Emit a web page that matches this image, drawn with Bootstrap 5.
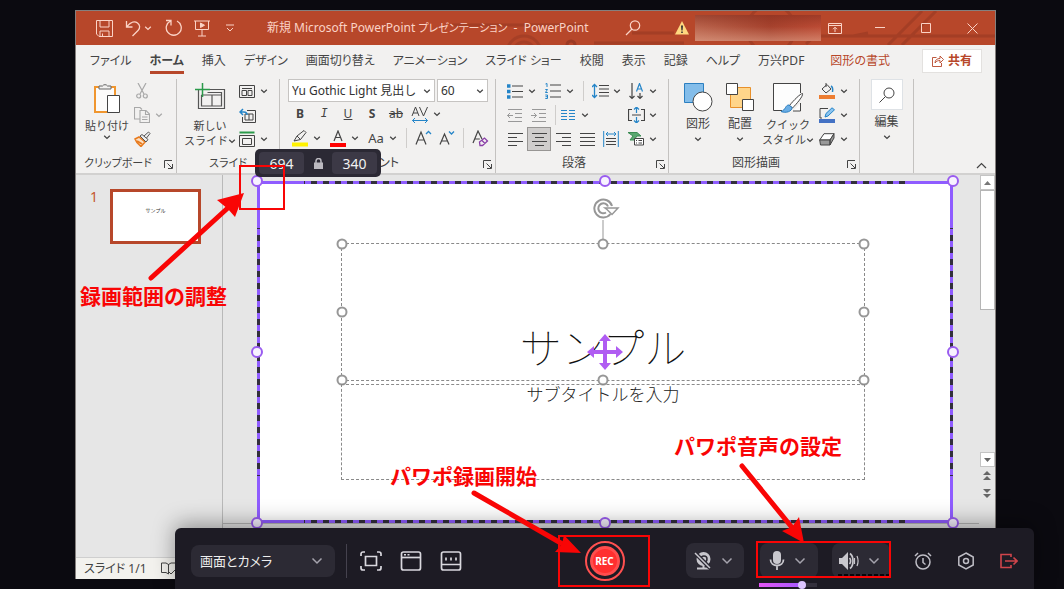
<!DOCTYPE html>
<html lang="ja">
<head>
<meta charset="utf-8">
<meta name="viewport" content="width=device-width, initial-scale=1">
<title>PowerPoint</title>
<link href="https://cdn.jsdelivr.net/npm/bootstrap@5.3.0/dist/css/bootstrap.min.css" rel="stylesheet">
<style>
:root{--ppt:#b7472a;--vio:#8f5cff;--hot:#f90505;--dark:#1d1b24;--dark2:#2c2a34;--ink:#444}
html,body{height:100%}
body{background:#0b0a10;font-family:"Noto Sans","Noto Sans CJK JP",sans-serif;font-size:12px;line-height:16px;color:var(--ink);font-feature-settings:"palt";overflow:hidden}
button{font-family:inherit;background:none;border:0;padding:0;color:inherit}
svg{display:block;flex:none}
svg:not([fill]){fill:none}
svg:not([stroke]){stroke:currentColor}
.app{height:calc(100% - 20px);margin:10px 68px 10px 75px;background:#f2f1f0;border:1px solid #85807e;border-bottom:0}
/* title bar */
.tbar{height:34px;background:var(--ppt);color:#fbd3c6}
.circuit{left:320px;right:0;top:0;bottom:0;color:#9b3a24}
.qat button{width:28px}
.smudge{width:126px;height:26px;background:linear-gradient(rgba(140,48,30,.6),rgba(190,80,55,.1) 45%,rgba(230,170,145,.55)),linear-gradient(90deg,#b9664f,#a3402c 60%,#bb4a34)}
.winbtn{width:46px;height:34px}
/* tabs */
.tabs{height:29px;padding-left:14px;gap:18px;padding-top:2px}
.tabs a{color:var(--ink);text-decoration:none;line-height:20px;white-space:nowrap}
.tabs a.on{font-weight:700;padding-top:3px;border-bottom:3px solid var(--ppt)}
.tabs a.ctx{color:var(--ppt)}
.share{width:60px;height:24px;background:#fff;border:1px solid #e3e1df;color:var(--ppt);font-weight:700;margin-right:13px}
/* ribbon */
.ribbon{height:99px;padding-top:5px}
.grp{border-right:1px solid #c4c2c0;position:relative}
.grp .cap{height:18px;text-align:center}
.sm{font-size:11px}
.launch{position:absolute;right:3px;bottom:4px}
.big{line-height:15px;white-space:nowrap}
.ic{width:24px;height:24px;display:flex;align-items:center;justify-content:center}
.ch{width:10px;height:24px;display:flex;align-items:center;justify-content:center}
.ic.on{background:#cfcdcc;border:1px solid #979593}
.vsep{width:1px;height:20px;background:#cfcdcb}
.field{height:23px;border:1px solid #c6c4c2;background:#fff;position:relative}
.field select{display:block;appearance:none;border:0;background:transparent;width:100%;height:21px;padding:0 14px 0 3px;font-size:12px;line-height:21px;color:#333}
.field svg,.modebox svg{position:absolute;right:3px;top:50%;transform:translateY(-50%);pointer-events:none}
/* workspace */
.work{background:#e6e6e6;min-height:0;border-top:2px solid #d2d1d0}
.thumbs{width:147px;border-right:1px solid #b9b9b9;padding:14px 21px 0 14px}
.thumb{width:91px;height:55px;background:#fff;border:3px solid var(--ppt);font-size:5px;line-height:5px;color:#333}
.stage{padding:6px 26px 0 34px;min-width:0}
.slide{background:#fff;position:relative;padding:62px 88px 43px 84px}
.ph{border:1px dashed #8a8a8a;position:relative}
.ph-t{flex:138;margin-bottom:3px}
.ph-s{flex:96}
.ph h1{font:100 42px/48px "Noto Sans CJK JP",sans-serif;font-feature-settings:normal;color:#111;margin:0 0 10px}
.ph p{font:300 17px/17px "Noto Sans CJK JP",sans-serif;font-feature-settings:normal;color:#222;margin:0}
.grip{position:absolute;width:11px;height:11px;border:2px solid #979797;border-radius:50%;background:#fff;transform:translate(-50%,-50%)}
.vg{border-color:#9a5cf0;width:12px;height:12px;background:#f7f2ff}
.l0{left:0}.l5{left:50%}.l1{left:100%}.t0{top:0}.t5{top:50%}.t1{top:100%}
.edge{position:absolute;--d:#33303c}
.eh{left:0;right:0;height:3px;background:linear-gradient(90deg,var(--vio) 47px,transparent 47px,transparent calc(100% - 47px),var(--vio) calc(100% - 47px)),repeating-linear-gradient(90deg,var(--vio) 0 6px,var(--d) 6px 12px)}
.ev{top:0;bottom:0;width:3px;background:linear-gradient(var(--vio) 47px,transparent 47px,transparent calc(100% - 47px),var(--vio) calc(100% - 47px)),repeating-linear-gradient(var(--vio) 0 6px,var(--d) 6px 12px)}
.rot{left:50%;bottom:100%;transform:translateX(-10px)}
.mover{left:50%;top:50%;transform:translate(-50%,-50%)}
.notes{height:34px;border-top:1px solid #b5b5b5;background:#e6e6e6}
.sbar{width:16px}
.sbtn{width:15px;height:15px;background:#fff;border:1px solid #c4c4c4;display:flex;align-items:center;justify-content:center}
.sthumb{width:15px;height:120px;background:#fff;border:1px solid #b5b5b5}
.status{height:22px;background:#f3f2ee;border-top:1px solid #cfcfcf;padding-left:8px;gap:14px}
/* recorder */
.sizer{left:255px;top:149px;width:126px;height:28px;background:#2b2934;border-radius:5px;padding:0 4px}
.sizer input{width:45px;height:22px;border:0;border-radius:4px;background:#3c3946;color:#f1f1f1;text-align:center;font-size:14px;padding:0;font-family:"Noto Sans",sans-serif}
.rec{left:175px;right:30px;bottom:0;height:61px;background:var(--dark);border-radius:6px 6px 0 0;color:#d9d8de;display:grid;grid-template-columns:1fr auto 1fr;align-items:center;padding:4px 16px 0;box-shadow:0 -4px 22px rgba(0,0,0,.38)}
.modebox{width:144px;height:32px;position:relative}
.modebox select{appearance:none;width:100%;height:32px;border:0;border-radius:8px;background:var(--dark2);color:#eee;padding:0 30px 0 9px;font-size:13px;font-feature-settings:"palt"}
.modebox svg{right:12px}
.dev{width:58px;height:35px;border-radius:8px;background:var(--dark2);color:#c9c8ce;gap:9px;padding-right:4px}
.recbtn{width:40px;height:40px;border-radius:50%;border:2px solid #ff5050;padding:3px}
.recbtn span{display:block;height:30px;border-radius:50%;background:#ff2f2f;border:3px solid #ff4d4d;color:#fff;font:700 10px/24px "Noto Sans",sans-serif}
.vol{position:absolute;left:-1px;top:38px;width:58px;height:8px;margin:0;appearance:none;background:linear-gradient(90deg,#e455f5,#a45bff 44px,#34313d 44px) center/100% 4px no-repeat}
.vol::-webkit-slider-thumb{appearance:none;width:8px;height:8px;border-radius:50%;background:#dcc5ff}
.lvl{position:absolute;left:6px;right:0;bottom:2px;height:2px;background:repeating-linear-gradient(90deg,#08070b 0 4px,transparent 4px 6px)}
/* callouts */
.note{position:absolute;color:var(--hot);font:700 21px/24px "Noto Sans CJK JP",sans-serif;font-feature-settings:normal;white-space:nowrap}
.box{position:absolute;border:2px solid var(--hot);pointer-events:none}
.arrow{position:absolute;color:var(--hot);pointer-events:none}
</style>
</head>
<body>
<svg width="0" height="0" class="position-absolute"><defs>
<symbol id="dn" viewBox="0 0 8 8"><path d="M1.2 2.8 4 5.4 6.8 2.8" stroke-width="1.3"/></symbol>
<symbol id="dn2" viewBox="0 0 12 12"><path d="M1.5 3.5 6 8l4.500-4.500" stroke-width="1.5"/></symbol>
<symbol id="la" viewBox="0 0 9 9"><path d="M.5 8V.5H8M3.500 3.500l4.500 4.500M8.500 4v4.500H4"/></symbol>
</defs></svg>

<main class="app d-flex flex-column">
  <header class="tbar d-flex align-items-center position-relative">
    <svg class="circuit position-absolute" width="600" height="34" viewBox="0 0 600 34" stroke-width="3"><path d="M56 14h132M198 32h90M236 22h42M410 33l9-8h38l15-3M457 25h142M492 34l34-34M506 34l34-34" opacity=".7"/><circle cx="128" cy="42" r="17" opacity=".6"/><circle cx="128" cy="42" r="11" opacity=".6"/><circle cx="175" cy="34" r="4"/><circle cx="375" cy="18" r="24" opacity=".7"/></svg>
    <div class="qat d-flex align-items-center position-relative" style="margin-left:14px">
      <button class="d-flex justify-content-center" aria-label="保存"><svg width="17" height="17" viewBox="0 0 17 17"><path d="M.5.5h16v16H3l-2.500-2.500zM4 .5V7h9V.5M4 16.500V11h9v5.500M6.500 13.500v3"/></svg></button>
      <button class="d-flex justify-content-center ms-1" style="width:22px" aria-label="元に戻す"><svg width="17" height="17" viewBox="0 0 17 17" stroke-width="1.300"><path d="M1.500 1v6h6M2 6.500C6 1.500 10 1 12.500 3s3 5 .5 7.500L7.500 16"/></svg></button>
      <svg width="8" height="8"><use href="#dn"/></svg>
      <button class="d-flex justify-content-center ms-2" aria-label="やり直し"><svg width="18" height="18" viewBox="0 0 18 18" stroke-width="1.300"><path d="M1 1.500h5v5M5.500 2A7.500 7.500 0 1 0 12 2"/></svg></button>
      <button class="d-flex justify-content-center" aria-label="開始"><svg width="16" height="17" viewBox="0 0 16 17"><path d="M0 1h16M1.500 1v8.500h13V1M8 9.500V16M4 16h8"/><path d="M6.500 3v4.500l4-2.250z" fill="currentColor"/></svg></button>
      <button class="d-flex justify-content-center" aria-label="カスタマイズ"><svg width="8" height="9" viewBox="0 0 8 9"><path d="M0 1h8M1 4l3 3 3-3"/></svg></button>
    </div>
    <div class="position-relative text-nowrap" style="margin-left:23px">新規 Microsoft PowerPoint <span class="sm">プレゼンテーション</span>&nbsp; -&nbsp; PowerPoint</div>
    <div class="d-flex align-items-center ms-auto position-relative">
      <button aria-label="検索"><svg width="16" height="16" viewBox="0 0 16 16" stroke-width="1.200"><circle cx="10" cy="5.500" r="4.700"/><path d="M7 9 1 15"/></svg></button>
      <svg style="margin:0 6px 0 34px" width="14" height="14" viewBox="0 0 14 14" stroke="none"><path d="M7 0l7 13.500H0z" fill="#ffd880"/><path d="M6 4.500h2L7.600 9.500H6.400zM6.200 10.500h1.600v1.600H6.200z" fill="#333"/></svg>
      <div class="smudge"></div>
      <button class="d-flex justify-content-center" style="width:28px" aria-label="リボン"><svg width="14" height="11" viewBox="0 0 14 11"><path d="M.5.5h13v10H.5zM.5 2.500h13M7 9V4.500M5 6.200l2-2 2 2"/></svg></button>
      <button class="winbtn d-flex align-items-center justify-content-center ms-2" aria-label="最小化"><svg width="10" height="10"><path d="M0 4.500h10"/></svg></button>
      <button class="winbtn d-flex align-items-center justify-content-center" aria-label="最大化"><svg width="10" height="10"><path d="M.5.5h9v9h-9z"/></svg></button>
      <button class="winbtn d-flex align-items-center justify-content-center" aria-label="閉じる"><svg width="11" height="11"><path d="m.5.500 10 10m0-10-10 10"/></svg></button>
    </div>
  </header>

  <nav class="tabs d-flex align-items-center">
    <a href="#">ファイル</a><a href="#" class="on">ホーム</a><a href="#">挿入</a><a href="#">デザイン</a><a href="#">画面切り替え</a><a href="#">アニメーション</a><a href="#">スライド ショー</a><a href="#">校閲</a><a href="#">表示</a><a href="#">記録</a><a href="#">ヘルプ</a><a href="#">万兴PDF</a><a href="#" class="ctx ms-2">図形の書式</a>
    <button class="share d-flex align-items-center justify-content-center gap-1 ms-auto"><svg width="12" height="12" viewBox="0 0 12 12"><path d="M4.500 2.500h-4v9h9V8M3 8c0-3 2-4.500 5-4.500V1l3.500 3.500L8 8V5.500C6 5.500 4.500 6 3 8z" stroke-width=".9"/></svg>共有</button>
  </nav>

  <section class="ribbon d-flex">
    <div class="grp d-flex flex-column" style="width:101px">
      <div class="d-flex flex-grow-1 ps-2">
        <button class="big sm d-flex flex-column align-items-center" style="width:46px">
          <svg class="mt-1" width="28" height="31" viewBox="0 0 28 31"><path d="M2 4h20v25H2z" stroke="#f0962f" stroke-width="2" fill="#fcfbfa"/><path d="M6 6V3h3.500a3 3 0 0 1 5 0H18v3z" fill="#f2f1f0" stroke="#666"/><path d="M14.500 12.500h12v17h-12z" fill="#fff" stroke="#444"/></svg>
          <span class="mt-1">貼り付け</span><svg width="8" height="8"><use href="#dn"/></svg>
        </button>
        <div class="text-secondary">
          <button class="ic" aria-label="切り取り"><svg width="12" height="16" viewBox="0 0 12 16" stroke="#a8a8a8" stroke-width="1.200"><path d="M2 0l6 11M10 0 4 11"/><circle cx="2.700" cy="13" r="2"/><circle cx="9.300" cy="13" r="2"/></svg></button>
          <div class="d-flex"><button class="ic" aria-label="コピー"><svg width="16" height="16" viewBox="0 0 16 16" stroke="#a8a8a8" stroke-width="1.100"><path d="M6 12H.5V.5H6l2 2M6 3.500h6l3.500 3.500v8.500H6zM11.500 3.500v4h4M8 10h5.500M8 12.500h5.500"/></svg></button><span class="ch"><svg width="8" height="8" stroke="#a8a8a8"><use href="#dn"/></svg></span></div>
          <button class="ic" aria-label="書式のコピー"><svg width="17" height="16" viewBox="0 0 17 16"><path d="m1 8 4-2 6 5-4 4.500C5 14 2 11 1 8z" fill="#fbe0c4" stroke="#e87a1d" stroke-width="1.500"/><path d="M3 10l5 3" stroke="#e87a1d" stroke-width="2"/><path d="m6 5 2-1.500 6 5L12 11zM10 5l4.500-4 1.500 1.500L12.500 7" stroke="#555" fill="#eee"/></svg></button>
        </div>
      </div>
      <div class="cap sm pe-3">クリップボード</div><svg class="launch" width="9" height="9"><use href="#la"/></svg>
    </div>

    <div class="grp d-flex flex-column" style="width:103px">
      <div class="d-flex flex-grow-1 ps-2">
        <button class="big sm d-flex flex-column align-items-center" style="width:50px">
          <svg class="mt-1" width="31" height="27" viewBox="0 0 31 27"><path d="M3.500 6.500h26v19h-26zM6.500 12h20M6.500 12v11h20V9.500h-14M17 12v11" stroke="#555" stroke-width="1.200"/><path d="M7.500 0v14M0 6.500h15" stroke="#2a9a4a" stroke-width="1.500"/></svg>
          <span class="mt-2">新しい</span><span class="d-flex align-items-center">スライド<svg width="8" height="8"><use href="#dn"/></svg></span>
        </button>
        <div>
          <div class="d-flex"><button class="ic" aria-label="レイアウト"><svg width="16" height="13" viewBox="0 0 16 13"><path d="M.5.500h15v12H.5zM3 3.500h10M3 5.500h4.500v5H3zM9 5.500h4v5H9z"/></svg></button><span class="ch"><svg width="8" height="8"><use href="#dn"/></svg></span></div>
          <button class="ic" aria-label="リセット"><svg width="17" height="15" viewBox="0 0 17 15"><path d="M8 2.500h8.500v12h-13V9M6 6h8v6H6zM10 6v6"/><path d="M1 4h4c2 0 3 1 3 3M4 1 1 4l3 3" stroke="#2585c8" stroke-width="1.500"/></svg></button>
          <div class="d-flex"><button class="ic" aria-label="セクション"><svg width="16" height="16" viewBox="0 0 16 16"><path d="M.5 1.500h15" stroke="#2a9a4a" stroke-width="2"/><path d="M.5 4.500h15v11H.5zM3.500 7.500h9v6h-9z"/></svg></button><span class="ch"><svg width="8" height="8"><use href="#dn"/></svg></span></div>
        </div>
      </div>
      <div class="cap sm">スライド</div>
    </div>

    <div class="grp d-flex flex-column" style="width:216px">
      <div class="flex-grow-1 ps-2">
        <div class="d-flex" style="gap:2px">
          <div class="field" style="width:147px"><select aria-label="フォント"><option>Yu Gothic Light 見出し</option></select><svg width="8" height="8"><use href="#dn"/></svg></div>
          <div class="field" style="width:51px"><select aria-label="サイズ"><option>60</option></select><svg width="8" height="8"><use href="#dn"/></svg></div>
        </div>
        <div class="d-flex">
          <button class="ic fw-bold">B</button><button class="ic fst-italic font-monospace">I</button><button class="ic text-decoration-underline">U</button><button class="ic fw-bold">S</button><button class="ic text-decoration-line-through">ab</button>
          <button class="ic" aria-label="文字の間隔"><svg width="18" height="17" viewBox="0 0 18 17"><path d="m1 10 3.500-9L8 10M2.200 7h4.600M8.500 1l4 9 4-9"/><path d="M1.500 14.500h15M4 12l-2.500 2.500L4 17M14 12l2.500 2.500L14 17" stroke="#2585c8"/></svg></button><span class="ch"><svg width="8" height="8"><use href="#dn"/></svg></span>
        </div>
        <div class="d-flex align-items-center">
          <button class="ic" aria-label="蛍光ペン"><svg width="16" height="17" viewBox="0 0 16 17"><path d="M0 14.500h16" stroke="#fff200" stroke-width="4"/><path d="m2 11 3-5 7-5.500 2 2L8.500 9.500zM5 6l3.500 3.500"/></svg></button><span class="ch"><svg width="8" height="8"><use href="#dn"/></svg></span>
          <button class="ic ms-1" aria-label="フォントの色"><svg width="16" height="17" viewBox="0 0 16 17"><path d="M0 15h16" stroke="#f00" stroke-width="4"/><path d="M4 11 8 1l4 10M5.200 7.500h5.600" stroke-width="1.200"/></svg></button><span class="ch"><svg width="8" height="8"><use href="#dn"/></svg></span>
          <button class="ic ms-1" style="font-size:13px">Aa</button><span class="ch"><svg width="8" height="8"><use href="#dn"/></svg></span>
          <span class="vsep ms-2 me-1"></span>
          <button class="ic" aria-label="拡大"><svg width="17" height="16" viewBox="0 0 17 16"><path d="M1 14.500 6 2l5 12.500M2.800 10h6.400" stroke-width="1.200"/><path d="m11 4 2.500-2.500L16 4" stroke="#2585c8" stroke-width="1.300"/></svg></button>
          <button class="ic" aria-label="縮小"><svg width="16" height="16" viewBox="0 0 16 16"><path d="M1 14.500 5.500 4 10 14.500M2.800 11h5.400" stroke-width="1.200"/><path d="M10 1.500 12.500 4 15 1.500" stroke="#2585c8" stroke-width="1.300"/></svg></button>
          <span class="vsep ms-1"></span>
          <button class="ic ms-1" aria-label="書式のクリア"><svg width="17" height="17" viewBox="0 0 17 17"><path d="M1 13 6 1l4 8M2.800 9h5" stroke-width="1.200"/><path d="m7.500 12 5-4 3 3-5 4.500H8zM9.500 10l3.500 3.500" stroke="#8a3fa8" stroke-width="1.300"/></svg></button>
        </div>
      </div>
      <div class="cap pe-3">フォント</div><svg class="launch" width="9" height="9"><use href="#la"/></svg>
    </div>

    <div class="grp d-flex flex-column" style="width:173px">
      <div class="flex-grow-1" style="padding:0 10px 0 7px">
        <div class="d-flex align-items-center">
          <button class="ic" aria-label="箇条書き"><svg width="16" height="15" viewBox="0 0 16 15"><path d="M5 2h11M5 7.500h11M5 13h11"/><path d="M0 2h3.500M0 7.500h3.500M0 13h3.500" stroke="#2585c8" stroke-width="3.500"/></svg></button><span class="ch"><svg width="8" height="8"><use href="#dn"/></svg></span>
          <button class="ic ms-1" aria-label="段落番号"><svg width="16" height="16" viewBox="0 0 16 16"><path d="M5 2h11M5 8h11M5 14h11"/><path d="M.5 1 2 .5V4M.3 6.500h2.200L.4 9.500h2.400M.3 12h2.200v3.500H.3M.5 13.700h2" stroke="#2585c8"/></svg></button><span class="ch"><svg width="8" height="8"><use href="#dn"/></svg></span>
          <span class="vsep ms-2"></span>
          <button class="ic ms-1" aria-label="行間"><svg width="17" height="16" viewBox="0 0 17 16"><path d="M7 2.500h10M7 6h10M7 9.500h10M7 13h10"/><path d="M2.500 1v14M0 4l2.500-2.500L5 4M0 12l2.500 2.500L5 12" stroke="#2585c8" stroke-width="1.300"/></svg></button><span class="ch"><svg width="8" height="8"><use href="#dn"/></svg></span>
          <button class="ic ms-auto" aria-label="文字列の方向"><svg width="15" height="17" viewBox="0 0 15 17"><path d="M3 0v15.500M.5 13 3 15.500 5.500 13M11 10v5.500M8.500 13l2.500 2.500 2.500-2.500" stroke-width="1.200"/><path d="m7.500 8.500 3-8 3 8M8.500 6h4" stroke="#2585c8" stroke-width="1.200"/></svg></button><span class="ch"><svg width="8" height="8"><use href="#dn"/></svg></span>
        </div>
        <div class="d-flex align-items-center">
          <button class="ic" aria-label="インデント解除"><svg width="16" height="13" viewBox="0 0 16 13" stroke="#999"><path d="M1 .5h14M8 4.500h7M8 8.500h7M1 12.500h14M6 6.500H.5M3 4 .5 6.500 3 9"/></svg></button>
          <button class="ic" aria-label="インデント"><svg width="16" height="13" viewBox="0 0 16 13" stroke="#999"><path d="M1 .5h14M8 4.500h7M8 8.500h7M1 12.500h14M0 6.500h5.500M3 4l2.500 2.500L3 9"/></svg></button>
          <span class="vsep mx-1"></span>
          <button class="ic" style="width:16px" aria-label="段組み"><svg width="14" height="10" viewBox="0 0 14 10" stroke="#2585c8"><path d="M0 .5h6M0 3.500h6M0 6.500h6M0 9.500h6M8 .5h6M8 3.500h6M8 6.500h6M8 9.500h6"/></svg></button><span class="ch ms-1"><svg width="8" height="8"><use href="#dn"/></svg></span>
          <button class="ic ms-auto" aria-label="文字の配置"><svg width="17" height="16" viewBox="0 0 17 16"><path d="M4 2.500H.5v11H4M13 2.500h3.500v11H13M4 8h9" stroke-width="1.200"/><path d="M8.500 0v6M8.500 10v6M6 2.500 8.500 0 11 2.500M6 13.500 8.500 16l2.500-2.500" stroke="#2585c8" stroke-width="1.200"/></svg></button><span class="ch"><svg width="8" height="8"><use href="#dn"/></svg></span>
        </div>
        <div class="d-flex align-items-center">
          <button class="ic" aria-label="左揃え"><svg width="15" height="13" viewBox="0 0 15 13"><path d="M0 .5h15M0 4.500h9M0 8.500h15M0 12.500h9"/></svg></button>
          <button class="ic on" aria-label="中央揃え"><svg width="15" height="13" viewBox="0 0 15 13"><path d="M0 .5h15M3 4.500h9M0 8.500h15M3 12.500h9"/></svg></button>
          <button class="ic" aria-label="右揃え"><svg width="15" height="13" viewBox="0 0 15 13"><path d="M0 .5h15M6 4.500h9M0 8.500h15M6 12.500h9"/></svg></button>
          <button class="ic" aria-label="両端揃え"><svg width="15" height="13" viewBox="0 0 15 13"><path d="M0 .5h15M0 4.500h15M0 8.500h15M0 12.500h15"/></svg></button>
          <button class="ic" aria-label="均等割り付け"><svg width="16" height="16" viewBox="0 0 16 16"><path d="M3 7.500h10M3 10.500h10M3 13.500h10"/><path d="M.7 0v16M15.300 0v16M3 3h10M5 1 3 3l2 2M11 1l2 2-2 2" stroke="#2585c8"/></svg></button>
          <button class="ic ms-auto" aria-label="SmartArt"><svg width="17" height="14" viewBox="0 0 17 14"><path d="M0 .5h9l4 3.500H9L6 8H2l3-4z" fill="#5aa870" stroke="#3c8c54"/><path d="M6.500 6.500h9v6.500h-9z" fill="#fff"/><path d="M8 8.500h1M10.500 8.500H14M8 11h1M10.500 11H14"/></svg></button><span class="ch"><svg width="8" height="8"><use href="#dn"/></svg></span>
        </div>
      </div>
      <div class="cap pe-3">段落</div><svg class="launch" width="9" height="9"><use href="#la"/></svg>
    </div>

    <div class="grp d-flex flex-column" style="width:191px">
      <div class="d-flex flex-grow-1 ps-2">
        <button class="big d-flex flex-column align-items-center" style="width:42px"><svg class="mt-1" width="29" height="29" viewBox="0 0 29 29"><path d="M.5.500h19v19H.5z" fill="#83bdea" stroke="#2c7fc0"/><circle cx="18.500" cy="18.500" r="9.500" fill="#fff" stroke="#444"/></svg><span class="mt-1">図形</span><svg class="mt-1" width="8" height="8"><use href="#dn"/></svg></button>
        <button class="big d-flex flex-column align-items-center" style="width:42px"><svg class="mt-1" width="29" height="29" viewBox="0 0 29 29"><path d="M4.500 4.500h20v20h-20z" fill="#ffd58a" stroke="#e8902a"/><path d="M.5.500h11v11H.5zM16.500 16.500h11v11h-11z" fill="#fff" stroke="#444"/></svg><span class="mt-1">配置</span><svg class="mt-1" width="8" height="8"><use href="#dn"/></svg></button>
        <button class="big sm d-flex flex-column align-items-center" style="width:54px"><svg class="mt-1" width="31" height="30" viewBox="0 0 31 30"><path d="M9 27.500H.5V.5h27V10M27.500 20v8H20" fill="#fdfdfd"/><path d="M29.500 10.500c-2 0-9 7-13 12l3 2.500c4-4 11-12 10-14.500z" fill="#fff"/><path d="M16 22c-4 0-3 5-8 6.500 5 2 11 0 11-4z" fill="#6aaee6" stroke="#2c7fc0"/></svg><span class="mt-1">クイック</span><span class="d-flex align-items-center">スタイル<svg width="8" height="8"><use href="#dn"/></svg></span></button>
        <div>
          <div class="d-flex"><button class="ic" aria-label="塗りつぶし"><svg width="16" height="16" viewBox="0 0 16 16"><path d="M0 14h16" stroke="#ed7d31" stroke-width="4"/><path d="m3 6 5-4.500L12 6l-5 4zM7 4V0"/><path d="M12 3c2 1 2 3 1.500 6" stroke="#2585c8" stroke-width="1.500"/></svg></button><span class="ch"><svg width="8" height="8"><use href="#dn"/></svg></span></div>
          <div class="d-flex"><button class="ic" aria-label="枠線"><svg width="16" height="16" viewBox="0 0 16 16"><path d="M0 14h16" stroke="#4472c4" stroke-width="4"/><path d="M9 1.500H1V11h2"/><path d="m6 10 1-3.500L13 .8l2.500 2L9 9z" fill="#8cc4f0" stroke="#2585c8"/></svg></button><span class="ch"><svg width="8" height="8"><use href="#dn"/></svg></span></div>
          <div class="d-flex"><button class="ic" aria-label="効果"><svg width="16" height="13" viewBox="0 0 16 13"><path d="M.7 7 5 .700h10L11 7z" fill="#fff"/><path d="M.7 7H11v5H1.500zM11 7l4-6.300V5l-4 7z" fill="#999"/></svg></button><span class="ch"><svg width="8" height="8"><use href="#dn"/></svg></span></div>
        </div>
      </div>
      <div class="cap pe-3">図形描画</div><svg class="launch" width="9" height="9"><use href="#la"/></svg>
    </div>

    <div class="grp d-flex flex-column" style="width:54px">
      <button class="big d-flex flex-column align-items-center"><span class="bg-white border d-flex align-items-center justify-content-center" style="width:32px;height:31px"><svg width="16" height="16" viewBox="0 0 16 16"><circle cx="10" cy="6" r="5"/><path d="m6.500 9.500-6 6"/></svg></span><span class="mt-1">編集</span><svg class="mt-1" width="8" height="8"><use href="#dn"/></svg></button>
    </div>
    <button class="ms-auto align-self-end me-2 mb-1" aria-label="リボンを折りたたむ"><svg width="11" height="7"><path d="m1 6 4.500-4.500L10 6" stroke-width="1.200"/></svg></button>
  </section>

  <section class="work d-flex flex-grow-1">
    <aside class="thumbs d-flex align-items-start justify-content-between flex-shrink-0">
      <span style="color:#c4552f;font-size:14px">1</span>
      <button class="thumb d-flex justify-content-center pt-3">サンプル</button>
    </aside>
    <div class="d-flex flex-column flex-grow-1">
      <div class="stage d-flex flex-column flex-grow-1">
        <article class="slide d-flex flex-column flex-grow-1">
          <div class="ph ph-t d-flex align-items-end justify-content-center"><h1>サンプル</h1>
            <svg class="rot position-absolute" width="28" height="46" viewBox="0 0 28 46" stroke="#979797"><path d="M10 22v24"/><path d="M17.500 16a9 9 0 1 1 1.500-8" stroke-width="2"/><path d="M13 14.500a5 5 0 1 1 2-6" stroke-width="2"/><path d="M12 10h13l-6 6.500-5-5z" fill="#fff" stroke-width="1.500"/></svg>
            <i class="grip l0 t0"></i><i class="grip l5 t0"></i><i class="grip l1 t0"></i><i class="grip l0 t5"></i><i class="grip l1 t5"></i><i class="grip l0 t1"></i><i class="grip l5 t1"></i><i class="grip l1 t1"></i>
          </div>
          <div class="ph ph-s text-center"><p>サブタイトルを入力</p></div>
          <i class="edge eh t0"></i><i class="edge eh bottom-0"></i><i class="edge ev l0"></i><i class="edge ev end-0"></i>
          <i class="grip vg l0 t0"></i><i class="grip vg l5 t0"></i><i class="grip vg l1 t0"></i><i class="grip vg l0 t5"></i><i class="grip vg l1 t5"></i><i class="grip vg l0 t1"></i><i class="grip vg l5 t1"></i><i class="grip vg l1 t1"></i>
          <svg class="mover position-absolute" width="36" height="36" viewBox="0 0 36 36" stroke="none" fill="#b05cf2"><path d="m18 0 6 7h-4v9h9v-4l7 6-7 6v-4h-9v9h4l-6 7-6-7h4v-9H7v4l-7-6 7-6v4h9V7h-4z"/></svg>
        </article>
      </div>
      <div class="notes"></div>
    </div>
    <div class="sbar d-flex flex-column align-items-center">
      <span class="sbtn"><svg width="7" height="4"><path d="M0 4 3.500 0 7 4z" fill="#777" stroke="none"/></svg></span>
      <span class="sthumb"></span>
      <span class="sbtn mt-auto"><svg width="7" height="4"><path d="M0 0 3.500 4 7 0z" fill="#666" stroke="none"/></svg></span>
      <svg class="mt-1" width="8" height="9" fill="#666" stroke="none"><path d="M0 4 4 0l4 4zM0 9l4-4 4 4z"/></svg>
      <svg style="margin:9px 0 59px" width="8" height="9" fill="#666" stroke="none"><path d="m0 0 4 4 4-4zM0 5l4 4 4-4z"/></svg>
    </div>
  </section>
  <footer class="status d-flex align-items-center"><span>スライド 1/1</span><svg width="15" height="13" viewBox="0 0 15 13"><path d="M7.500 2v10L5 10.500H.5V1H5l2.500 1.500L10 1h4.500v9M8 10l2 2 4-4"/></svg></footer>
</main>

<div class="sizer position-absolute d-flex align-items-center justify-content-between">
  <input aria-label="幅" value="694">
  <svg width="9" height="11" viewBox="0 0 9 11"><path d="M0 4.500h9V11H0z" fill="#bbb9c0" stroke="none"/><path d="M2 5V3a2.500 2.500 0 0 1 5 0v2" stroke="#bbb9c0" stroke-width="1.500"/></svg>
  <input aria-label="高さ" value="340">
</div>

<div class="rec position-absolute">
  <div class="d-flex align-items-center">
    <div class="modebox"><select aria-label="録画モード"><option>画面とカメラ</option></select><svg width="12" height="12" stroke="#a5a3ad"><use href="#dn2"/></svg></div>
    <span class="vsep" style="height:34px;background:#45424e;margin:0 13px 0 11px"></span>
    <div class="d-flex" style="gap:18px">
      <button aria-label="範囲"><svg width="22" height="20" viewBox="0 0 22 20" stroke-width="1.700"><path d="M5.500 5.500h11v9h-11zM1 5V3a2 2 0 0 1 2-2h2M17 1h2a2 2 0 0 1 2 2v2M21 15v2a2 2 0 0 1-2 2h-2M5 19H3a2 2 0 0 1-2-2v-2"/></svg></button>
      <button aria-label="ウィンドウ"><svg width="22" height="20" viewBox="0 0 22 20" stroke-width="1.700"><rect x="1.500" y="1" width="19" height="18" rx="2"/><path d="M1.500 6.500h19"/><path d="M4 3.800h2M7.500 3.800h2" stroke-width="1.500"/></svg></button>
      <button aria-label="キーボード"><svg width="22" height="20" viewBox="0 0 22 20" stroke-width="1.700"><rect x="1.500" y="1" width="19" height="18" rx="2"/><path d="M1.500 13.500h19M6 6.500v3M11 6.500v3M16 6.500v3"/></svg></button>
    </div>
  </div>
  <button class="recbtn"><span>REC</span></button>
  <div class="d-flex align-items-center justify-content-end">
    <button class="dev d-flex align-items-center justify-content-center me-3" aria-label="カメラ"><svg width="18" height="19" viewBox="0 0 18 19"><circle cx="9.500" cy="8" r="7" fill="currentColor" stroke="none"/><circle cx="10" cy="8" r="3" stroke="#2c2a34" stroke-width="1.500"/><path d="M3 17.500h12M9.500 14v3" stroke-width="2"/><path d="m1 2 15 15" stroke="#2c2a34" stroke-width="4"/><path d="m1 2 15 15" stroke-width="1.500"/></svg><svg width="12" height="12" stroke="#a5a3ad"><use href="#dn2"/></svg></button>
    <div class="position-relative" style="margin-right:14px"><button class="dev d-flex align-items-center justify-content-center" aria-label="マイク"><svg width="16" height="19" viewBox="0 0 16 19"><rect x="4" y="0" width="8" height="13" rx="4" fill="currentColor" stroke="none"/><path d="M1.500 8.500c0 8 13 8 13 0M8 15v4" stroke-width="1.800"/></svg><svg width="12" height="12" stroke="#a5a3ad"><use href="#dn2"/></svg></button>
      <input type="range" class="vol" aria-label="音量" value="78"></div>
    <button class="dev d-flex align-items-center justify-content-center position-relative" aria-label="スピーカー"><svg width="20" height="18" viewBox="0 0 20 18"><path d="M0 6h3l6-6v18l-6-6H0z" fill="currentColor" stroke="none"/><path d="M11 1.500c4 3 4 12 0 15M10.500 6c1.500 1.500 1.500 4.500 0 6" stroke-width="1.700"/><path d="M15.500 6v6M18 4c1.300 3 1.300 7 0 10" stroke-width="1.200"/></svg><svg width="12" height="12" stroke="#a5a3ad"><use href="#dn2"/></svg><i class="lvl"></i></button>
    <div class="d-flex ms-4" style="gap:25px">
      <button aria-label="タイマー"><svg width="18" height="18" viewBox="0 0 18 18" stroke="#bfbec6" stroke-width="1.500"><circle cx="9" cy="10" r="7"/><path d="M9 6v4.500l2.500 2M1 4l3-3M17 4l-3-3"/></svg></button>
      <button aria-label="設定"><svg width="18" height="18" viewBox="0 0 18 18" stroke="#bfbec6" stroke-width="1.500"><path d="m9 1 7.200 4v8L9 17l-7.200-4V5z"/><circle cx="9" cy="9" r="2.500"/></svg></button>
      <button aria-label="終了"><svg width="18" height="18" viewBox="0 0 18 18" stroke="#d0454b" stroke-width="1.600"><path d="M11 5V2.500H1v13h10V13M5 9h12M13.500 5.500 17 9l-3.500 3.500"/></svg></button>
    </div>
  </div>
</div>

<div class="box" style="left:239px;top:165px;width:46px;height:45px"></div>
<div class="box" style="left:558px;top:535px;width:92px;height:52px"></div>
<div class="box" style="left:756px;top:541px;width:135px;height:37px"></div>
<div class="note" style="left:80px;top:283px">録画範囲の調整</div>
<div class="note" style="left:390px;top:463px">パワポ録画開始</div>
<div class="note" style="left:674px;top:433px">パワポ音声の設定</div>
<svg class="arrow" style="left:140px;top:185px" width="110" height="100"><path d="M11 93 90 21" stroke-width="5" stroke-linecap="round"/><path d="M104 8 95 32 88 24 77 15z" fill="currentColor" stroke="none"/></svg>
<svg class="arrow" style="left:465px;top:485px" width="120" height="75"><path d="m9 8 92 53" stroke-width="5" stroke-linecap="round"/><path d="M116 68 90 67 97 59 99 50z" fill="currentColor" stroke="none"/></svg>
<svg class="arrow" style="left:735px;top:457px" width="75" height="92"><path d="m7 9 52 64" stroke-width="5" stroke-linecap="round"/><path d="M69 86 47 74 57 70 64 60z" fill="currentColor" stroke="none"/></svg>
<script src="https://cdn.jsdelivr.net/npm/bootstrap@5.3.0/dist/js/bootstrap.bundle.min.js"></script>
</body>
</html>
